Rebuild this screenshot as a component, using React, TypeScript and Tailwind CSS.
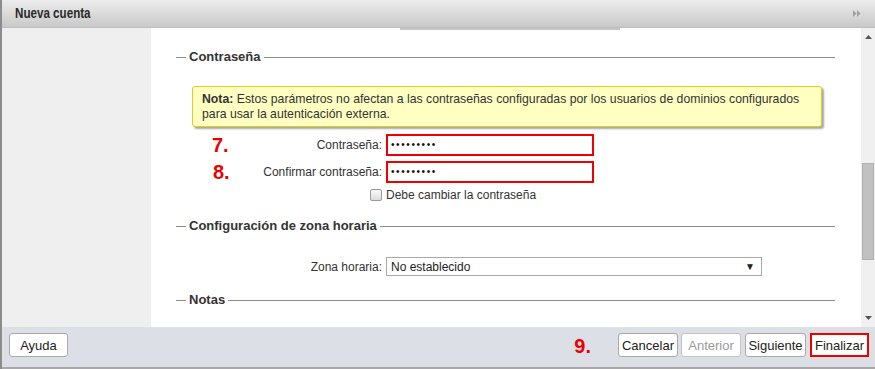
import React from "react";

const font = { fontFamily: '"Liberation Sans", Arial, sans-serif' };

// section header with a line on both sides of the title
function Legend({ title, className = "" }: { title: string; className?: string }) {
  return (
    <div className={`flex items-center h-[16px] ${className}`}>
      <div className="w-[10px] h-px bg-[#8a8a8a]" />
      <span className="px-[3px] text-[13px] font-bold text-[#333] leading-[16px]">{title}</span>
      <div className="flex-1 h-px bg-[#8a8a8a]" />
    </div>
  );
}

function Mark({ n, className = "" }: { n: string; className?: string }) {
  return (
    <span className={`text-[20px] font-bold text-[#ee0000] leading-[20px] ${className}`}>{n}</span>
  );
}

function Btn({
  label,
  className = "",
  disabled = false,
}: {
  label: string;
  className?: string;
  disabled?: boolean;
}) {
  return (
    <button
      className={`h-[24px] bg-white text-[13px] leading-none ${
        disabled ? "text-[#9a9a9a] border border-[#c4c4c4]" : "text-[#222]"
      } ${className}`}
    >
      {label}
    </button>
  );
}

function Dots() {
  return (
    <div className="ml-[4px] w-[208px] h-[22px] border-2 border-[#ee0000] flex items-center pl-[3px]">
      <span className="text-[10px] tracking-[1.6px] text-[#111] leading-none">•••••••••</span>
    </div>
  );
}

export default function App() {
  return (
    <div style={font} className="w-[875px] h-[369px] flex flex-col bg-white overflow-hidden border-l-2 border-[#8c8c8c]">
      {/* title bar */}
      <div className="h-[28px] shrink-0 flex items-center justify-between pl-[13px] pr-[14px] bg-gradient-to-b from-[#ececec] to-[#c9c9c9] border-b border-[#bdbdbd]">
        <span className="inline-block origin-left scale-x-[0.83] text-[14px] font-bold text-[#2a2a2a]">
          Nueva cuenta
        </span>
        <svg width="8" height="7" viewBox="0 0 8 7">
          <path d="M0 0 L3.5 3.5 L0 7 Z M4 0 L7.5 3.5 L4 7 Z" fill="#a0a0a0" />
        </svg>
      </div>

      {/* body */}
      <div className="flex-1 flex min-h-0">
        <div className="w-[149px] shrink-0 bg-[#efefef]" />
        <div className="flex-1 overflow-hidden pl-[25px] pr-[26px]">
          <div className="h-[2px] ml-[224px] w-[220px] bg-[#c6c6c6]" />

          <Legend title="Contraseña" className="mt-[19px]" />

          <div className="mt-[21px] ml-[16px] w-[630px] h-[41px] bg-[#ffffc2] border border-[#e2cc1e] rounded-[3px] shadow-[2px_2px_2px_rgba(0,0,0,0.35)] px-[9px] pt-[5px] text-[12.25px] leading-[15px] text-[#333]">
            <b>Nota:</b> Estos parámetros no afectan a las contraseñas configuradas por los usuarios de dominios configurados
            <br />
            para usar la autenticación externa.
          </div>

          <div className="mt-[7px] flex items-center h-[22px]">
            <div className="w-[206px] flex items-center text-[12px] text-[#333]">
              <Mark n="7." className="ml-[36px]" />
              <span className="ml-auto">Contraseña:</span>
            </div>
            <Dots />
          </div>

          <div className="mt-[5px] flex items-center h-[22px]">
            <div className="w-[206px] flex items-center text-[12px] text-[#333]">
              <Mark n="8." className="ml-[37px]" />
              <span className="ml-auto">Confirmar contraseña:</span>
            </div>
            <Dots />
          </div>

          <div className="mt-[5px] flex items-center h-[14px]">
            <div className="w-[206px] flex justify-end">
              <div className="w-[12px] h-[12px] rounded-[2px] border border-[#9a9a9a] bg-gradient-to-b from-[#fafafa] to-[#dcdcdc]" />
            </div>
            <span className="ml-[4px] text-[12px] text-[#333]">Debe cambiar la contraseña</span>
          </div>

          <Legend title="Configuración de zona horaria" className="mt-[16px]" />

          <div className="mt-[23px] flex items-center h-[19px]">
            <div className="w-[206px] text-right text-[12px] text-[#333]">Zona horaria:</div>
            <div className="ml-[4px] w-[376px] h-[19px] border border-[#a9a9a9] flex items-center justify-between pl-[4px] pr-[6px] text-[12px] text-[#222]">
              <span>No establecido</span>
              <span className="text-[10px] text-[#222]">▼</span>
            </div>
          </div>

          <Legend title="Notas" className="mt-[16px]" />
        </div>

        {/* scrollbar */}
        <div className="w-[14px] shrink-0 bg-[#f0f0f0] flex flex-col items-center">
          <svg width="7" height="4" viewBox="0 0 7 4" className="mt-[7px]">
            <path d="M0 4 L3.5 0 L7 4 Z" fill="#555" />
          </svg>
          <div className="mt-[124px] w-[12px] h-[97px] bg-[#c1c1c1] border border-[#b0b0b0]" />
          <div className="flex-1" />
          <svg width="7" height="4" viewBox="0 0 7 4" className="mb-[7px]">
            <path d="M0 0 L7 0 L3.5 4 Z" fill="#555" />
          </svg>
        </div>
      </div>

      {/* footer */}
      <div className="h-[42px] shrink-0 bg-[#dcdfe5] border-b-2 border-[#a8a8a8] flex items-start pt-[6px] pl-[7px] pr-[6px]">
        <Btn label="Ayuda" className="w-[59px] border border-[#a9a9a9] rounded-[3px]" />
        <div className="flex-1" />
        <Mark n="9." className="mt-[3px] mr-[27px]" />
        <div className="flex gap-[3px]">
          <Btn label="Cancelar" className="w-[60px] border border-[#a9a9a9] rounded-[3px]" />
          <Btn label="Anterior" disabled className="w-[60px] rounded-[3px]" />
          <Btn label="Siguiente" className="w-[61px] border border-[#a9a9a9] rounded-[3px] ml-[1px]" />
          <Btn label="Finalizar" className="w-[59px] border-2 border-[#ee0000] ml-[1px]" />
        </div>
      </div>
    </div>
  );
}
